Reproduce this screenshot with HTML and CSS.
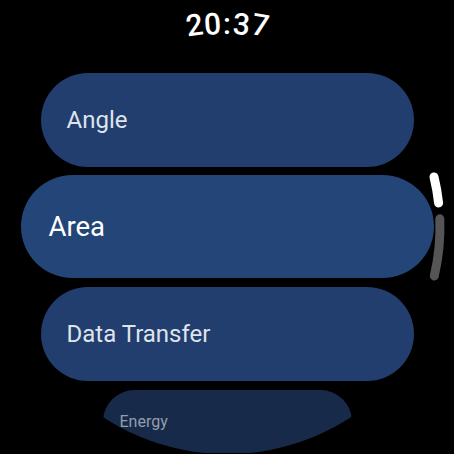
FILE: index.html
```html
<!DOCTYPE html>
<html>
<head>
<meta charset="utf-8">
<link rel="stylesheet" href="styles.css">
</head>
<body>
<div class="screen">
  <div class="time">
    <span class="ch c1">2</span><span class="ch c2">0</span><span class="ch c3">:</span><span class="ch c4">3</span><span class="ch c5">7</span>
  </div>
  <div class="list">
    <div class="chip chip-side"><span>Angle</span></div>
    <div class="chip chip-main"><span>Area</span></div>
    <div class="chip chip-side"><span>Data Transfer</span></div>
    <div class="chip chip-far"><span>Energy</span></div>
  </div>
  <svg class="scrollbar" width="454" height="454" viewBox="0 0 454 454">
    <path d="M434.0 176.9 A213 213 0 0 1 438.6 202.9" fill="none" stroke="#ffffff" stroke-width="9" stroke-linecap="round"/>
    <path d="M439.8 218.8 A213 213 0 0 1 434.3 276.0" fill="none" stroke="#555555" stroke-width="9" stroke-linecap="round"/>
  </svg>
</div>
</body>
</html>
```
FILE: styles.css
```css
html, body {
  margin: 0;
  padding: 0;
  background: #000;
}
.screen {
  position: relative;
  width: 454px;
  height: 454px;
  border-radius: 50%;
  overflow: hidden;
  background: #000;
  font-family: Roboto, "Liberation Sans", sans-serif;
  display: flex;
  flex-direction: column;
  align-items: center;
}
.time {
  padding-top: 9px;
  height: 30px;
  display: flex;
  justify-content: center;
  color: #fff;
  font-size: 30px;
  line-height: 30px;
  font-weight: 500;
}
.ch {
  display: inline-block;
  transform-origin: 50% 50%;
}
.c1 { transform: translate(-2px, 1.5px) rotate(-8deg); }
.c2 { transform: translate(-1px, 0.5px) rotate(-4deg); }
.c3 { margin: 0 1px; }
.c4 { transform: translate(1px, 0.5px) rotate(4deg); }
.c5 { transform: translate(3px, 1.5px) rotate(9deg); }
.list {
  margin-top: 34px;
  display: flex;
  flex-direction: column;
  align-items: center;
  width: 100%;
}
.chip {
  box-sizing: border-box;
  display: flex;
  align-items: center;
  flex-shrink: 0;
}
.chip-side {
  width: 373px;
  height: 94px;
  border-radius: 47px;
  background: #213e6e;
  color: #dfe4ec;
  font-size: 24px;
  padding-left: 26px;
}
.chip-side + .chip-main { margin-top: 8px; }
.chip-main {
  width: 413px;
  height: 103px;
  border-radius: 52px;
  background: #234577;
  color: #ffffff;
  font-size: 27.5px;
  padding-left: 28px;
}
.chip-main + .chip-side { margin-top: 9px; }
.chip-far {
  margin-top: 9px;
  width: 249px;
  height: 63px;
  border-radius: 32px;
  background: #182a4a;
  color: #949dac;
  font-size: 16px;
  padding-left: 17px;
}
.scrollbar {
  position: absolute;
  left: 0;
  top: 0;
}
```
